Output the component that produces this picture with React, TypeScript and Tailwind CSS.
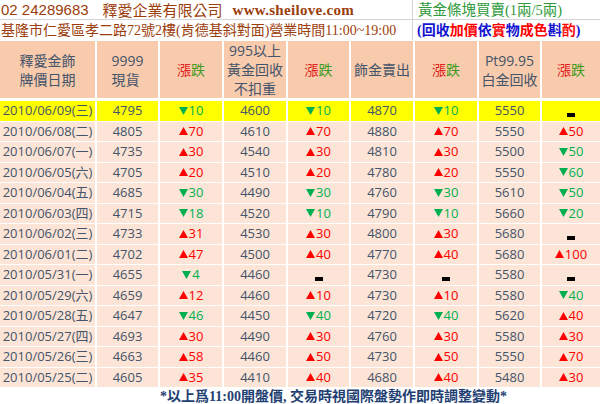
import type { ReactNode } from "react";

type Row = string[];

const rows: Row[] = [
  ["2010/06/09(三)", "4795", "v10", "4600", "v10", "4870", "v10", "5550", "-"],
  ["2010/06/08(二)", "4805", "^70", "4610", "^70", "4880", "^70", "5550", "^50"],
  ["2010/06/07(一)", "4735", "^30", "4540", "^30", "4810", "^30", "5500", "v50"],
  ["2010/06/05(六)", "4705", "^20", "4510", "^20", "4780", "^20", "5550", "v60"],
  ["2010/06/04(五)", "4685", "v30", "4490", "v30", "4760", "v30", "5610", "v50"],
  ["2010/06/03(四)", "4715", "v18", "4520", "v10", "4790", "v10", "5660", "v20"],
  ["2010/06/02(三)", "4733", "^31", "4530", "^30", "4800", "^30", "5680", "-"],
  ["2010/06/01(二)", "4702", "^47", "4500", "^40", "4770", "^40", "5680", "^100"],
  ["2010/05/31(一)", "4655", "v4", "4460", "-", "4730", "-", "5580", "-"],
  ["2010/05/29(六)", "4659", "^12", "4460", "^10", "4730", "^10", "5580", "v40"],
  ["2010/05/28(五)", "4647", "v46", "4450", "v40", "4720", "v40", "5620", "^40"],
  ["2010/05/27(四)", "4693", "^30", "4490", "^30", "4760", "^30", "5580", "^30"],
  ["2010/05/26(三)", "4663", "^58", "4460", "^50", "4730", "^50", "5550", "^70"],
  ["2010/05/25(二)", "4605", "^35", "4410", "^40", "4680", "^40", "5480", "^30"],
];

const cols = "grid grid-cols-[95px_61px_62px_62px_61px_62px_62px_61px_58px] gap-x-[2px]";

const Up = () => (
  <svg width="9" height="8" viewBox="0 0 9 8" className="mr-[1px]">
    <path d="M4.5 0 L9 8 L0 8 Z" fill="#ff0000" />
  </svg>
);

const Down = () => (
  <svg width="9" height="8" viewBox="0 0 9 8" className="mr-[1px]">
    <path d="M0 0 L9 0 L4.5 8 Z" fill="#00b050" />
  </svg>
);

const Change = ({ v }: { v: string }) => {
  if (v === "-")
    return <span className="inline-block w-[8px] h-[4px] bg-black translate-y-[4px]" />;
  const up = v[0] === "^";
  return (
    <span className={`flex items-center ${up ? "text-[#ff0000]" : "text-[#00b050]"}`}>
      {up ? <Up /> : <Down />}
      {v.slice(1)}
    </span>
  );
};

const UpDown = () => (
  <span>
    <span className="text-[#e0201a]">漲</span>
    <span className="text-[#3f9a1c]">跌</span>
  </span>
);

const Head = ({ children }: { children: ReactNode }) => (
  <div className="bg-[#f8cbad] flex flex-col items-center justify-center text-center leading-[19px]">
    {children}
  </div>
);

export default function App() {
  return (
    <div className="w-[600px] h-[404px] bg-white overflow-hidden text-[#44546a] font-['Open_Sans','Noto_Sans_CJK_TC',sans-serif]">
      {/* top banner */}
      <div className="grid grid-cols-[412px_1px_1fr] h-[20px] border-b border-[#d4d4d4] items-center leading-[18px]">
        <div className="flex items-center whitespace-nowrap text-[#9c3d0c] pl-[1px]">
          <span className="text-[15px] font-['Liberation_Sans',sans-serif]">02 24289683</span>
          <span className="ml-[14px] text-[15px] font-['Noto_Sans_CJK_TC',sans-serif]">釋愛企業有限公司</span>
          <span className="ml-[10px] text-[15px] font-['Liberation_Serif',serif] font-bold tracking-[0.3px]">www.sheilove.com</span>
        </div>
        <div className="h-full bg-[#d4d4d4]" />
        <div className="pl-[5px] whitespace-nowrap text-[#2e9a3a] text-[14.5px] font-['Liberation_Serif','Noto_Sans_CJK_TC',serif]">
          黃金條塊買賣(1兩/5兩)
        </div>
      </div>
      <div className="grid grid-cols-[412px_1px_1fr] h-[20px] items-center text-[14px] leading-[19px]">
        <div className="whitespace-nowrap text-[#9c3d0c] pl-[1px] font-['Liberation_Serif','Noto_Sans_CJK_TC',serif]">
          基隆市仁愛區孝二路72號2樓(肯德基斜對面)營業時間11:00~19:00
        </div>
        <div className="h-full bg-[#d4d4d4]" />
        <div className="pl-[4px] whitespace-nowrap text-[#1414d0] font-['Liberation_Serif','Noto_Sans_CJK_TC',serif] font-bold">
          (回收<span className="text-[#ff0000]">加價</span>依<span className="text-[#ff0000]">實</span>物<span className="text-[#ff0000]">成色</span>斟<span className="text-[#ff0000]">酌</span>)
        </div>
      </div>

      {/* table header */}
      <div className={`${cols} h-[57px] mt-[1px] text-[14px]`}>
        <Head>
          <span>釋愛金飾</span>
          <span>牌價日期</span>
        </Head>
        <Head>
          <span>9999</span>
          <span className="pr-[4px]">現貨</span>
        </Head>
        <Head>
          <UpDown />
        </Head>
        <Head>
          <span>995以上</span>
          <span>黃金回收</span>
          <span>不扣重</span>
        </Head>
        <Head>
          <UpDown />
        </Head>
        <Head>
          <span>飾金賣出</span>
        </Head>
        <Head>
          <UpDown />
        </Head>
        <Head>
          <span>Pt99.95</span>
          <span>白金回收</span>
        </Head>
        <Head>
          <UpDown />
        </Head>
      </div>

      {/* rows */}
      <div className="mt-[3px] flex flex-col gap-y-[2px] text-[13px]">
        {rows.map((r, i) => (
          <div key={r[0]} className={`${cols} h-[18.5px]`}>
            {r.map((c, j) => (
              <div
                key={j}
                className={`flex items-center justify-center ${i === 0 ? "bg-[#ffff00]" : "bg-[#fce4d6]"}`}
              >
                {j === 2 || j === 4 || j === 6 || j === 8 ? <Change v={c} /> : c}
              </div>
            ))}
          </div>
        ))}
      </div>

      {/* footnote */}
      <div className="pl-[160px] mt-[2px] whitespace-nowrap text-[14px] leading-[18px] font-bold text-[#1f3f73] font-['Liberation_Serif','Noto_Sans_CJK_TC',serif]">
        *以上爲11:00開盤價, 交易時視國際盤勢作即時調整變動*
      </div>
    </div>
  );
}
